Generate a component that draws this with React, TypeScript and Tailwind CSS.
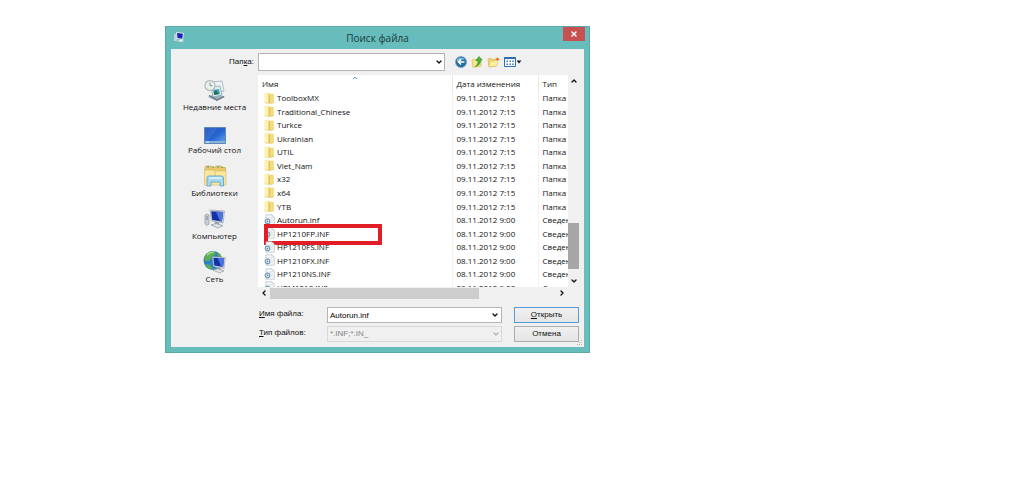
import { useState } from "react";
import { ChevronDown, ChevronLeft, ChevronRight, ChevronUp, X } from "lucide-react";

const files = [
    { name: "ToolboxMX", folder: true },
    { name: "Traditional_Chinese", folder: true },
    { name: "Turkce", folder: true },
    { name: "Ukrainian", folder: true },
    { name: "UTIL", folder: true },
    { name: "Viet_Nam", folder: true },
    { name: "x32", folder: true },
    { name: "x64", folder: true },
    { name: "YTB", folder: true },
    { name: "Autorun.inf", folder: false },
    { name: "HP1210FP.INF", folder: false, marked: true },
    { name: "HP1210FS.INF", folder: false },
    { name: "HP1210FX.INF", folder: false },
    { name: "HP1210NS.INF", folder: false },
    { name: "HPM1210.INF", folder: false },
];

const FolderIcon = () => (
    <svg viewBox="0 0 11 12" className="h-3 w-[11px] shrink-0">
        <path d="M.8 1.2 4.500.5 5.500 1.800H9.500V11H.8z" fill="#f0d678" />
        <path d="M.8 1.200 4.500.5V11.600L.8 10.800z" fill="#fdf2b4" />
        <path d="M6 3 9.800 2.200v8.600L6 11.800z" fill="#f3dc80" />
        <path d="M5.200 2.500v8.800" stroke="#d9b74c" strokeWidth=".9" />
        <path d="M.8 10.900 4.500 11.600 9.800 10.900" fill="none" stroke="#dcbc58" strokeWidth=".5" />
    </svg>
);

const InfIcon = () => (
    <svg viewBox="0 0 11 12" className="h-3 w-[11px] shrink-0">
        <path d="M2 .8h6l2.300 2.300v8.100H2z" fill="#f6f9fb" stroke="#b3bdc4" strokeWidth=".7" />
        <path d="M8 .8v2.300h2.300M4 4h4M6.500 6h2.500M7 8h2" fill="none" stroke="#c5cfd5" strokeWidth=".6" />
        <circle cx="3.500" cy="7.400" r="2.300" fill="#dceaf2" stroke="#7b9db3" strokeWidth="1.200" />
        <circle cx="3.500" cy="7.400" r=".7" fill="#48718c" />
    </svg>
);

const RecentIcon = () => (
    <svg viewBox="0 0 24 24" className="h-6 w-6">
        <path d="m5 19 8-4 9 4-8 4z" fill="#9fb2bc" />
        <path d="M6 17.5 14 22l7-3.5" fill="none" stroke="#62747d" strokeWidth="1.2" />
        <path d="m9 4 10-1 2 10-10 2z" fill="#eef3f5" stroke="#a1afb7" strokeWidth=".8" />
        <path d="m8 9 9-1 2 9-9 2z" fill="#d8eef4" stroke="#8aa3af" strokeWidth=".8" />
        <path d="m10 12 6-1 1 5-6 1z" fill="#4aa1bd" />
        <path d="m11 14 2-2 3 4-5 1z" fill="#2b7059" />
        <circle cx="7" cy="7.5" r="5" fill="#edf1ee" stroke="#b6bfbb" strokeWidth="1.3" />
        <path d="M7 4.500v3.200h2.500" fill="none" stroke="#71878d" strokeWidth=".9" />
    </svg>
);

const DesktopIcon = () => (
    <svg viewBox="0 0 24 24" className="h-6 w-6">
        <defs>
            <linearGradient id="screen" x1="0" y1="0" x2="1" y2="1">
                <stop offset="0" stopColor="#1a48b5" />
                <stop offset=".55" stopColor="#2867d2" />
                <stop offset="1" stopColor="#6aa8ee" />
            </linearGradient>
        </defs>
        <path d="M1.500 6.500h21v16h-21z" fill="url(#screen)" stroke="#5f87b4" />
        <path d="M2 20h20v2H2z" fill="#8bb1dc" />
        <path d="M2 7h13L5 19.500H2z" fill="#5e8ee0" opacity=".3" />
        <path d="M3 21h3" stroke="#e8f2fa" />
    </svg>
);

const LibrariesIcon = () => (
    <svg viewBox="0 0 24 24" className="h-6 w-6">
        <path d="M2 3.500 3 2h5l1 1.500h3L13 2h5l1 1.500h3.500v17H2z" fill="#e8c968" stroke="#cbaa4d" strokeWidth=".7" />
        <path d="M4 3h2M14 3h2" stroke="#3e93b8" />
        <path d="M9 3h2M18 3.200h2" stroke="#7e9a45" />
        <path d="M1.500 6h9l1 1H23v14H1.500z" fill="#f8e6a0" stroke="#d8bb62" strokeWidth=".6" />
        <path d="M12 7v5" stroke="#dcc067" strokeWidth=".8" />
        <path d="M4 22v-8q0-2 2-2h12.500q2 0 2 2v8H17v-4H8v4z" fill="#a9d9ee" stroke="#569fc4" strokeWidth=".8" />
        <path d="M6 14h12.500" stroke="#e2f5fd" strokeWidth="1.500" />
    </svg>
);

const Monitor = () => (
    <>
        <path d="m7 3 14.500 1-1.500 12L8.500 14z" fill="#d4dade" stroke="#9aa5ad" strokeWidth=".7" />
        <path d="m8.200 4.200 12 .8-1.300 9.500-9.700-1.600z" fill="#1530a9" />
        <path d="m13 4.500 7.200.5-1.300 9.500-2-.4z" fill="#4b75dd" />
        <path d="m12 14.500 4 .8.500 3.500-5-1z" fill="#9aa6ad" />
        <path d="m8 18 5-1.500 7 2.200-5 2.300z" fill="#e0e5e8" stroke="#87939b" strokeWidth=".7" />
    </>
);

const ComputerIcon = () => (
    <svg viewBox="0 0 24 24" className="h-6 w-6">
        <path d="m2 8 2-1 2 1v9l-2 1.500L2 17z" fill="#c9d1d6" stroke="#8e9aa2" strokeWidth=".7" />
        <path d="M3 10h2M3 12h2" stroke="#5f6d76" strokeWidth=".8" />
        <Monitor />
    </svg>
);

const NetworkIcon = () => (
    <svg viewBox="0 0 24 24" className="h-6 w-6">
        <circle cx="10" cy="10.500" r="9.500" fill="#2b83c1" />
        <path d="M3 4.500Q6 .7 11 1.200l2 3-4 2-2 4-4.500 1Q.4 8 3 4.500M2 14l5 1 3 5Q4 19 2 14M14 2q4 2 5 6l-4-2z" fill="#63ae4b" />
        <path d="M4 5q3-3 7-3" fill="none" stroke="#bce4a8" strokeWidth="1.200" />
        <g transform="translate(3 4) scale(.9)">
            <Monitor />
        </g>
    </svg>
);

const places = [
    { name: "Недавние места", icon: RecentIcon },
    { name: "Рабочий стол", icon: DesktopIcon },
    { name: "Библиотеки", icon: LibrariesIcon },
    { name: "Компьютер", icon: ComputerIcon },
    { name: "Сеть", icon: NetworkIcon },
];

const Toolbar = () => (
    <div className="flex items-center gap-1 pl-[10px]">
        <button aria-label="Назад" className="h-3 w-3">
            <svg viewBox="0 0 12 12" className="h-3 w-3">
                <circle cx="6" cy="6" r="5.500" fill="#2369a3" stroke="#78a5c7" strokeWidth=".8" />
                <path d="M2 3.500Q6-.5 10 3.500 6 3 2 6z" fill="#86b7da" />
                <path d="M9.500 6h-6M6 3.500 3.500 6 6 8.500" fill="none" stroke="#fff" strokeWidth="1.500" />
            </svg>
        </button>
        <button aria-label="На уровень вверх" className="h-3 w-3">
            <svg viewBox="0 0 12 12" className="h-3 w-3">
                <path d="m1 4 3-1 1 1 5-1v7l-8 1.500z" fill="#f7e68c" stroke="#d6bb55" strokeWidth=".7" />
                <path d="M4.500 10.500Q7.500 8 7 4.500H4.800L8 .5l3.200 3.500H9.500q.3 5-5 6.500" fill="#4fb52f" stroke="#23861d" strokeWidth=".6" />
            </svg>
        </button>
        <button aria-label="Новая папка" className="h-3 w-[13px]">
            <svg viewBox="0 0 13 12" className="h-3 w-[13px]">
                <path d="m1 3 3-.8L5.500 3.500 9 3v7l-7 1z" fill="#f0d677" stroke="#d3b34f" strokeWidth=".7" />
                <path d="m3 5.500 8-1.200-1 5.700-8 1z" fill="#fbed9e" stroke="#dabd59" strokeWidth=".5" />
                <circle cx="10.500" cy="3.200" r="1.700" fill="#f3a14e" />
                <circle cx="10.500" cy="3.200" r=".9" fill="#de4a35" />
            </svg>
        </button>
        <button aria-label="Вид" className="h-3 w-[19px]">
            <svg viewBox="0 0 19 12" className="h-3 w-[19px]">
                <path d="M.5 1.500h11v9H.5z" fill="#fff" stroke="#2f6db4" />
                <path d="M.5 2.200h11" stroke="#2f6db4" strokeWidth="1.800" />
                <path d="M2.500 5.200H10M2.500 8.200H10" stroke="#3e75ba" strokeWidth="1.600" strokeDasharray="1.500 1.400" />
                <path d="M12.500 4.500h5L15 7.500z" fill="#1d1d2b" />
            </svg>
        </button>
    </div>
);

const App = () => {
    const [fileName, setFileName] = useState("Autorun.inf");

    return (
        <div className="min-h-screen bg-white pt-[26px] pl-[165px] font-['Open_Sans','Noto_Sans',sans-serif] text-[8px] text-[#111]">
            <section className="w-full max-w-[425px] border border-[#5aa9a7] bg-[#66bdbb] px-[5px] pb-[5px]">
                <header className="relative flex h-[22px] items-center justify-center">
                    <svg viewBox="0 0 12 12" className="absolute top-1 left-[2px] h-3 w-3">
                        <path d="M1 3h3v7H1z" fill="#c4d1d7" />
                        <path d="m3 1 8 1-1 7-6-1z" fill="#dce8ee" />
                        <path d="m4 2 6 .7-.8 5-4.700-.7z" fill="#1728b0" />
                        <path d="m4 10 4-1.500 3 1.500-3 1z" fill="#e4eaed" />
                    </svg>
                    <h1 className="text-[10px] text-[#20393b]">Поиск файла</h1>
                    <button aria-label="Закрыть" className="absolute top-0 -right-px flex h-[14px] w-[22px] items-center justify-center bg-[#c75050] text-white">
                        <X className="h-2 w-2" strokeWidth={4} />
                    </button>
                </header>

                <div className="relative grid grid-cols-[87px_minmax(0,1fr)] grid-rows-[26px_auto] bg-[#f0f0f0] pr-[5px] pb-[5px]">
                    <label htmlFor="folder" className="self-center pr-1 text-right font-['Liberation_Sans',sans-serif]">
                        Пап<u>к</u>а:
                    </label>
                    <div className="flex items-center">
                        <div className="relative w-[187px]">
                            <select id="folder" className="block h-[18px] w-full appearance-none border border-[#b4b4b4] bg-white px-1">
                                <option></option>
                            </select>
                            <ChevronDown className="pointer-events-none absolute top-[5px] right-[2px] h-2 w-2" strokeWidth={4} />
                        </div>
                        <Toolbar />
                    </div>

                    <nav>
                        {places.map((place) => (
                            <button key={place.name} className="flex h-[43px] w-full flex-col items-center pt-[3px] leading-[10px] whitespace-nowrap">
                                <place.icon />
                                {place.name}
                            </button>
                        ))}
                    </nav>

                    <div>
                        <div className="grid grid-cols-[minmax(0,1fr)_11px]">
                            {/* File list */}
                            <div className="relative h-[212px] overflow-hidden bg-white">
                                <ChevronUp className="absolute top-0 left-[94px] h-[6px] w-[6px] text-[#3b8faa]" strokeWidth={4} />
                                <table className="w-full table-fixed border-collapse text-left leading-[13px] whitespace-nowrap">
                                    <colgroup>
                                        <col />
                                        <col className="w-[86px]" />
                                        <col className="w-[30px]" />
                                    </colgroup>
                                    <thead>
                                        <tr className="h-4">
                                            <th className="p-0 pl-1 font-normal">Имя</th>
                                            <th className="border-l border-[#e8e8e8] p-0 pl-1 font-normal">Дата изменения</th>
                                            <th className="border-l border-[#e8e8e8] p-0 pl-1 font-normal">Тип</th>
                                        </tr>
                                    </thead>
                                    <tbody className="h-[203px]">
                                        {files.map((file) => (
                                            <tr key={file.name}>
                                                <td className="p-0 pl-[6px]">
                                                    <div className="relative flex h-[13px] items-center gap-[2px]">
                                                        {file.folder ? <FolderIcon /> : <InfIcon />}
                                                        {file.name}
                                                        {file.marked && (
                                                            <span className="absolute -top-[3px] left-0 h-[21px] w-[118px] border-4 border-[#e21d25]" />
                                                        )}
                                                    </div>
                                                </td>
                                                <td className="border-l border-[#f2f2f2] p-0 pl-1">
                                                    {file.folder ? "09.11.2012 7:15" : "08.11.2012 9:00"}
                                                </td>
                                                <td className="border-l border-[#f2f2f2] p-0 pl-1">
                                                    {file.folder ? "Папка" : "Сведен"}
                                                </td>
                                            </tr>
                                        ))}
                                    </tbody>
                                </table>
                            </div>
                            <div className="flex flex-col items-center">
                                <ChevronUp className="mt-[2px] h-2 w-2" strokeWidth={4} />
                                <div className="mt-auto h-[46px] w-full bg-[#a6a6a6]" />
                                <ChevronDown className="mt-2 mb-[2px] h-2 w-2" strokeWidth={4} />
                            </div>
                            <div className="flex h-3 items-center">
                                <ChevronLeft className="mx-[2px] h-2 w-2" strokeWidth={4} />
                                <div className="h-[11px] w-[209px] bg-[#cdcdcd]" />
                                <ChevronRight className="mr-[2px] ml-auto h-2 w-2" strokeWidth={4} />
                            </div>
                        </div>

                        <form
                            className="mt-2 grid grid-cols-[69px_minmax(0,1fr)_65px] gap-y-[3px] font-['Liberation_Sans',sans-serif]"
                            onSubmit={(e) => e.preventDefault()}
                        >
                            <label htmlFor="file-name" className="pl-px leading-[14px]">
                                <u>И</u>мя файла:
                            </label>
                            <div className="mr-3 flex h-4 items-center self-end border border-[#b4b4b4] bg-white">
                                <input
                                    id="file-name"
                                    value={fileName}
                                    onChange={(e) => setFileName(e.target.value)}
                                    className="h-full min-w-0 flex-1 pl-[2px] text-black outline-none"
                                />
                                <button type="button" aria-label="Список файлов" className="px-[2px]">
                                    <ChevronDown className="h-2 w-2" strokeWidth={4} />
                                </button>
                            </div>
                            <button type="submit" className="h-4 border border-[#5b9bd5] bg-gradient-to-b from-[#f0f0f0] to-[#e5e5e5]">
                                <u>О</u>ткрыть
                            </button>

                            <label htmlFor="file-type" className="pl-px leading-[14px]">
                                <u>Т</u>ип файлов:
                            </label>
                            <div className="relative mr-3">
                                <select
                                    id="file-type"
                                    disabled
                                    className="block h-4 w-full appearance-none border border-[#d9d9d9] pl-[2px] text-[#838383] opacity-100"
                                >
                                    <option>*.INF;*.IN_</option>
                                </select>
                                <ChevronDown className="pointer-events-none absolute top-1 right-[2px] h-2 w-2 text-[#b5b5b5]" strokeWidth={4} />
                            </div>
                            <button type="button" className="h-4 border border-[#acacac] bg-gradient-to-b from-[#f0f0f0] to-[#e5e5e5]">
                                Отмена
                            </button>
                        </form>
                    </div>
                    <svg viewBox="0 0 6 6" className="absolute right-px bottom-px h-[6px] w-[6px]" fill="#b8b8b8">
                        <path d="M4 0h1v1H4zM2 2h1v1H2zM4 2h1v1H4zM0 4h1v1H0zM2 4h1v1H2zM4 4h1v1H4z" />
                    </svg>
                </div>
            </section>
        </div>
    );
};

export default App;
